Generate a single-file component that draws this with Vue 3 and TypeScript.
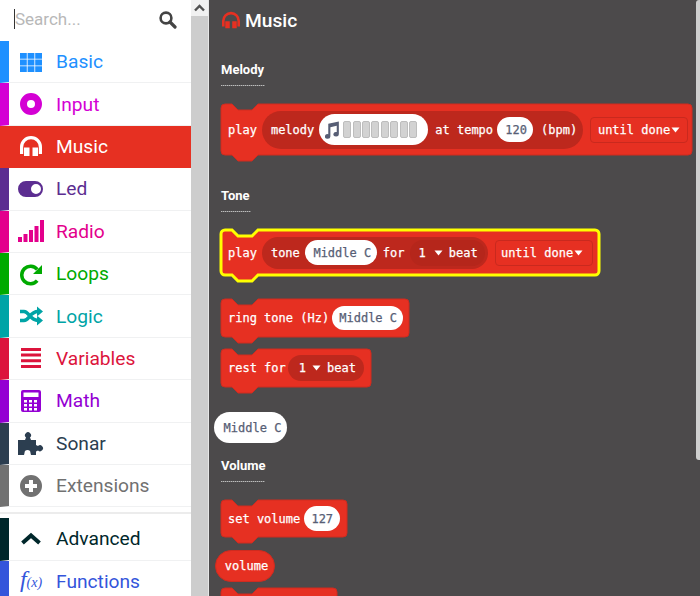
<script setup lang="ts">
interface Category {
  name: string
  color: string
  d?: string
  stroke?: string
  strokeWidth?: number
  active?: boolean
}

const headphones =
  'M5 20V13A11 11 0 0 1 27 13V20H23.8V13A7.8 7.8 0 0 0 8.2 13V20ZM9 13.5H14.5V22H9ZM17.5 13.5H23V22H17.5Z'

const rect = (x: number, y: number, w: number, h: number) => `M${x} ${y}h${w}v${h}h${-w}Z`

const gridIcon = [0, 1, 2]
  .flatMap((r) => [0, 1, 2].map((c) => rect(5 + c * 7.6, 3 + r * 6.6, 6.8, 5.8)))
  .join('')

const barsIcon = [5, 8, 12, 16, 22].map((h, i) => rect(3 + i * 5.5, 23 - h, 4, h)).join('')

const linesIcon = [2, 7.6, 13.3, 19].map((y) => rect(6, y, 20, 3)).join('')

const calcKeys = [11, 15, 19]
  .flatMap((y) => [9, 14, 19].map((x) => rect(x, y, 3, 2.6)))
  .join('')

const top: Category[] = [
  { name: 'Basic', color: '#1e90ff', d: gridIcon },
  {
    name: 'Input',
    color: '#d400d4',
    d: 'M5 12a11 11 0 1 0 22 0a11 11 0 1 0-22 0ZM12 12a4 4 0 1 0 8 0a4 4 0 1 0-8 0Z',
  },
  { name: 'Music', color: '#e63022', d: headphones, active: true },
  {
    name: 'Led',
    color: '#5c2d91',
    d: 'M11 4H20A8 8 0 0 1 20 20H11A8 8 0 0 1 11 4ZM16 12a5 5 0 1 0 10 0a5 5 0 1 0-10 0Z',
  },
  { name: 'Radio', color: '#e3008c', d: barsIcon },
  {
    name: 'Loops',
    color: '#00aa00',
    d: 'M23.54 6.25A10.5 10.5 0 1 0 23.54 19.75L20.86 17.5A7 7 0 1 1 20.86 8.5ZM27 3V12H18Z',
  },
  {
    name: 'Logic',
    color: '#00a4a6',
    d: 'M22 2.5L28 7.5L22 12.5ZM22 11.5L28 16.5L22 21.5Z',
    stroke: 'M5 7.5h4c5 0 6 9 14 9M5 16.5h4c5 0 6-9 14-9',
    strokeWidth: 3.5,
  },
  { name: 'Variables', color: '#dc143c', d: linesIcon },
  {
    name: 'Math',
    color: '#9400d3',
    d: `M8 1H24A2 2 0 0 1 26 3V21A2 2 0 0 1 24 23H8A2 2 0 0 1 6 21V3A2 2 0 0 1 8 1ZM8.5 3.5V8H23.5V3.5Z${calcKeys}`,
  },
  {
    name: 'Sonar',
    color: '#2c3e50',
    d: 'M3 9H10L11 6.5A3 3 0 1 1 15 6.5L16 9H21V14L23 15A3 3 0 1 1 23 19.5L21 20.5V24H16L15.5 22A3 3 0 1 0 9.5 22L9 24H3Z',
  },
  {
    name: 'Extensions',
    color: '#717171',
    d: 'M5 12a11 11 0 1 0 22 0a11 11 0 1 0-22 0ZM14 6H18V10H22V14H18V18H14V14H10V10H14Z',
  },
]

const cells = Array.from({ length: 8 }, (_, i) => i)

// block outline with the notch on top and the tab underneath
const blockPath = (w: number, h: number) =>
  `M0 4A4 4 0 0 1 4 0H11L17 6H31L37 0H${w - 4}A4 4 0 0 1 ${w} 4V${h - 4}A4 4 0 0 1 ${w - 4} ${h}` +
  `H37L31 ${h + 6}H17L11 ${h}H4A4 4 0 0 1 0 ${h - 4}Z`
</script>

<template>
  <div class="page">
    <aside class="toolbox">
      <div class="search">
        <span class="caret"></span>
        <span class="placeholder">Search...</span>
        <svg class="search-icon" width="18" height="18" viewBox="0 0 18 18">
          <circle cx="7" cy="7" r="5.4" fill="none" stroke="#444" stroke-width="2.6" />
          <path d="M11 11L16 16" stroke="#444" stroke-width="3.2" stroke-linecap="round" />
        </svg>
      </div>

      <div
        v-for="cat in top"
        :key="cat.name"
        class="cat"
        :class="{ active: cat.active }"
        :style="{ borderLeftColor: cat.color, color: cat.active ? '#fff' : cat.color }"
      >
        <svg class="cat-icon" width="32" height="26" viewBox="0 -1 32 26">
          <path :d="cat.d" fill="currentColor" fill-rule="evenodd" />
          <path
            v-if="cat.stroke"
            :d="cat.stroke"
            fill="none"
            stroke="currentColor"
            :stroke-width="cat.strokeWidth"
          />
        </svg>
        <span>{{ cat.name }}</span>
      </div>

      <div class="separator"></div>

      <div class="cat advanced">
        <svg class="cat-icon" width="32" height="26" viewBox="0 -1 32 26">
          <path d="M7.5 16L16 8.5L24.5 16" fill="none" stroke="currentColor" stroke-width="4" />
        </svg>
        <span>Advanced</span>
      </div>
      <div class="cat functions">
        <span class="cat-icon fx"><i>f</i><i class="fx-x">(x)</i></span>
        <span>Functions</span>
      </div>
    </aside>

    <div class="scrollbar">
      <div class="scroll-btn">
        <svg width="11" height="8" viewBox="0 0 11 8">
          <path d="M1 6.5L5.5 2L10 6.5" fill="none" stroke="#505050" stroke-width="2.4" />
        </svg>
      </div>
    </div>

    <main class="flyout">
      <div class="title">
        <svg width="20" height="18" viewBox="4 1 24 22">
          <path :d="headphones" fill="#e63022" fill-rule="evenodd" />
        </svg>
        <span>Music</span>
      </div>

      <div class="heading melody-heading">Melody</div>
      <div class="dots dots-long"></div>

      <!-- play melody -->
      <div class="block b-melody">
        <svg class="shape" width="471" height="57"><path :d="blockPath(471, 51)" /></svg>
        <div class="row">
          <span>play</span>
          <div class="pill pill-melody">
            <span>melody</span>
            <div class="field field-melody">
              <svg width="15" height="18" viewBox="2 0 14 17">
                <path
                  d="M5 2.5L15 0.5V12.5A2.6 2.2 0 1 1 13 10.4V4.6L7 5.8V14.5A2.6 2.2 0 1 1 5 12.4Z"
                  fill="#575e75"
                />
              </svg>
              <div class="cells">
                <span v-for="c in cells" :key="c" class="cell"></span>
              </div>
            </div>
            <span class="after-melody">at tempo</span>
            <div class="field field-tempo">120</div>
            <span class="bpm">(bpm)</span>
          </div>
          <div class="dropdown dropdown-first">
            <span>until done</span>
            <svg class="arrow" width="9" height="6" viewBox="0 0 9 6"><path d="M0.5 0.5H8.5L4.5 5.5Z" /></svg>
          </div>
        </div>
      </div>

      <div class="heading tone-heading">Tone</div>
      <div class="dots dots-short"></div>

      <!-- play tone -->
      <div class="block b-tone">
        <svg class="shape selected" width="378" height="51"><path :d="blockPath(378, 45)" /></svg>
        <div class="row">
          <span>play</span>
          <div class="pill pill-tone">
            <span>tone</span>
            <div class="field field-note">Middle C</div>
            <span class="after-note">for</span>
            <div class="beat beat-tone">
              <span>1</span>
              <svg class="arrow" width="9" height="6" viewBox="0 0 9 6"><path d="M0.5 0.5H8.5L4.5 5.5Z" /></svg>
              <span>beat</span>
            </div>
          </div>
          <div class="dropdown dropdown-tone">
            <span>until done</span>
            <svg class="arrow" width="9" height="6" viewBox="0 0 9 6"><path d="M0.5 0.5H8.5L4.5 5.5Z" /></svg>
          </div>
        </div>
      </div>

      <!-- ring tone -->
      <div class="block b-ring">
        <svg class="shape" width="188" height="44"><path :d="blockPath(188, 38)" /></svg>
        <div class="row">
          <span>ring tone (Hz)</span>
          <div class="field field-ring">Middle C</div>
        </div>
      </div>

      <!-- rest -->
      <div class="block b-rest">
        <svg class="shape" width="150" height="44"><path :d="blockPath(150, 38)" /></svg>
        <div class="row">
          <span>rest for</span>
          <div class="beat beat-rest">
            <span>1</span>
            <svg class="arrow" width="9" height="6" viewBox="0 0 9 6"><path d="M0.5 0.5H8.5L4.5 5.5Z" /></svg>
            <span>beat</span>
          </div>
        </div>
      </div>

      <div class="note-reporter">Middle C</div>

      <div class="heading volume-heading">Volume</div>
      <div class="dots dots-long"></div>

      <!-- set volume -->
      <div class="block b-volume">
        <svg class="shape" width="126" height="43"><path :d="blockPath(126, 37)" /></svg>
        <div class="row">
          <span>set volume</span>
          <div class="field field-volume">127</div>
        </div>
      </div>

      <div class="volume-reporter">volume</div>

      <div class="block b-last">
        <svg class="shape" width="116" height="44"><path :d="blockPath(116, 38)" /></svg>
      </div>
    </main>

    <div class="flyout-scroll"></div>
  </div>
</template>

<style>
html,
body {
  margin: 0;
  overflow: hidden;
}
</style>

<style scoped>
.page {
  position: relative;
  display: flex;
  width: 700px;
  height: 596px;
  overflow: hidden;
  background: #4c4a4b;
  font-family: Roboto, "Liberation Sans", sans-serif;
}

.toolbox {
  width: 191px;
  flex: none;
  background: #fff;
}

.search {
  position: relative;
  display: flex;
  align-items: center;
  height: 41px;
  box-sizing: border-box;
  padding: 0 14px 3px 15px;
  font-size: 17px;
  color: #b8b8b8;
}

.caret {
  position: absolute;
  left: 14px;
  top: 9px;
  width: 1px;
  height: 20px;
  background: #333;
}

.placeholder {
  flex: 1;
}

.search-icon {
  flex: none;
  margin-top: 2px;
}

.cat {
  display: flex;
  align-items: center;
  height: 42.4px;
  box-sizing: border-box;
  border-left: 9px solid transparent;
  border-bottom: 1.5px solid #f0f1f2;
  font-size: 19.2px;
}

.cat.active {
  background: #e63022;
  border-bottom-color: #e63022;
}

.cat-icon {
  flex: none;
  margin: 0 9px 0 6px;
}

.separator {
  height: 11px;
  box-sizing: border-box;
  background: linear-gradient(#fff 5px, #ececec 5px, #ececec 7px, #fff 7px);
}

.advanced {
  border-left-color: #00272b;
  color: #00272b;
}

.functions {
  border-left-color: #3455db;
  color: #3455db;
}

.fx {
  display: flex;
  align-items: baseline;
  justify-content: center;
  width: 32px;
  font-family: "Liberation Serif", serif;
  font-size: 24px;
  line-height: 26px;
}

.fx-x {
  font-size: 14px;
}

.scrollbar {
  width: 17px;
  flex: none;
  background: #cdcdcd;
  border-right: 1px solid #e6e6e6;
}

.scroll-btn {
  display: flex;
  align-items: center;
  justify-content: center;
  height: 16px;
  background: #f1f1f1;
}

.flyout {
  flex: 1;
  min-width: 0;
  padding-left: 12px;
  color: #fff;
}

.title {
  display: flex;
  align-items: center;
  gap: 4px;
  height: 40px;
  font-size: 19.2px;
  font-weight: 500;
}

.heading {
  height: 18px;
  font-size: 13px;
  font-weight: 700;
  line-height: 20px;
}

.melody-heading {
  margin-top: 20px;
}

.tone-heading {
  margin-top: 31px;
}

.volume-heading {
  margin-top: 13px;
}

.dots {
  height: 1px;
  margin-top: 7px;
  background: repeating-linear-gradient(90deg, #bdbdbd 0 1px, #7a7a7a 1px 2px);
}

.dots-long {
  width: 44px;
}

.dots-short {
  width: 30px;
}

.block {
  position: relative;
  font-family: "DejaVu Sans Mono", "Liberation Mono", monospace;
  font-size: 12px;
  -webkit-text-stroke: 0.25px currentColor;
}

.shape {
  position: absolute;
  left: 0;
  top: 0;
  overflow: visible;
}

.shape path {
  fill: #e63022;
  stroke: #cf2b1f;
  stroke-width: 1;
}

.shape.selected path {
  stroke: #ffff00;
  stroke-width: 3;
}

.row {
  position: relative;
  display: flex;
  align-items: center;
  gap: 5px;
  height: 100%;
  padding-left: 7px;
  white-space: pre;
}

.b-melody {
  width: 471px;
  height: 51px;
  margin-top: 18px;
}

.b-tone {
  width: 378px;
  height: 45px;
  margin-top: 18px;
}

.b-ring {
  width: 188px;
  height: 38px;
  margin-top: 24px;
}

.b-rest {
  width: 150px;
  height: 38px;
  margin-top: 12px;
}

.b-volume {
  width: 126px;
  height: 37px;
  margin-top: 18px;
}

.b-last {
  width: 116px;
  height: 38px;
  margin-top: 6px;
}

.pill {
  display: flex;
  align-items: center;
  gap: 5px;
  box-sizing: border-box;
  padding-left: 9px;
  background: #bd281d;
  border-radius: 19px;
}

.pill-melody {
  width: 321px;
  height: 38px;
}

.pill-tone {
  width: 226px;
  height: 32px;
}

.field {
  display: flex;
  align-items: center;
  justify-content: center;
  flex: none;
  box-sizing: border-box;
  background: #fff;
  color: #575e75;
  border-radius: 16px;
}

.field-melody {
  justify-content: flex-start;
  gap: 3px;
  width: 109px;
  height: 31px;
  padding-left: 6px;
}

.cells {
  display: flex;
  gap: 1.4px;
}

.cell {
  width: 8px;
  height: 17px;
  box-sizing: border-box;
  background: #d2d2d2;
  border: 1px solid #bdbdbd;
  border-radius: 2px;
}

.after-melody {
  margin-left: 2px;
}

.field-tempo {
  width: 36px;
  height: 25px;
  margin-left: -1px;
  padding-left: 2px;
}

.bpm {
  margin-left: 3px;
}

.dropdown {
  display: flex;
  align-items: center;
  gap: 1px;
  flex: none;
  box-sizing: border-box;
  width: 98px;
  height: 26px;
  border: 1px solid #c9291e;
  border-radius: 4px;
}

.dropdown-first {
  margin-left: 2px;
  padding-left: 7px;
}

.dropdown-tone {
  margin-left: 2px;
  padding-left: 5px;
}

.arrow {
  flex: none;
  fill: #fff;
}

.field-note {
  width: 72px;
  height: 25px;
  padding-left: 3px;
}

.after-note {
  margin-left: 1px;
}

.beat {
  display: flex;
  align-items: center;
  gap: 6px;
  flex: none;
  box-sizing: border-box;
  width: 75px;
  height: 26px;
  padding-left: 9px;
  background: #b5261b;
  border-radius: 13px;
}

.beat-tone .arrow {
  margin-left: 2px;
}

.beat-rest {
  width: 76px;
  margin-left: -3px;
  padding-left: 11px;
  background: #bd281d;
}

.field-ring {
  width: 71px;
  height: 24px;
  margin-left: -2px;
  padding-left: 1px;
  border-radius: 12px;
}

.field-volume {
  width: 36px;
  height: 25px;
  margin-left: -1px;
}

.note-reporter {
  display: flex;
  align-items: center;
  justify-content: center;
  box-sizing: border-box;
  width: 73px;
  height: 31px;
  margin: 25px 0 0 -7px;
  padding-left: 4px;
  background: #fff;
  border-radius: 16px;
  color: #575e75;
  font-family: "DejaVu Sans Mono", "Liberation Mono", monospace;
  font-size: 12px;
  -webkit-text-stroke: 0.25px currentColor;
}

.volume-reporter {
  display: flex;
  align-items: center;
  justify-content: center;
  box-sizing: border-box;
  width: 60px;
  height: 32px;
  margin: 13px 0 0 -6px;
  padding-left: 3px;
  background: #e63022;
  border: 1px solid #cf2b1f;
  border-radius: 16px;
  font-family: "DejaVu Sans Mono", "Liberation Mono", monospace;
  font-size: 12px;
  -webkit-text-stroke: 0.25px currentColor;
}

.flyout-scroll {
  position: absolute;
  right: 0;
  top: 0;
  width: 4px;
  height: 460px;
  background: #cfcfcf;
  border-radius: 3px 0 0 3px;
}
</style>
